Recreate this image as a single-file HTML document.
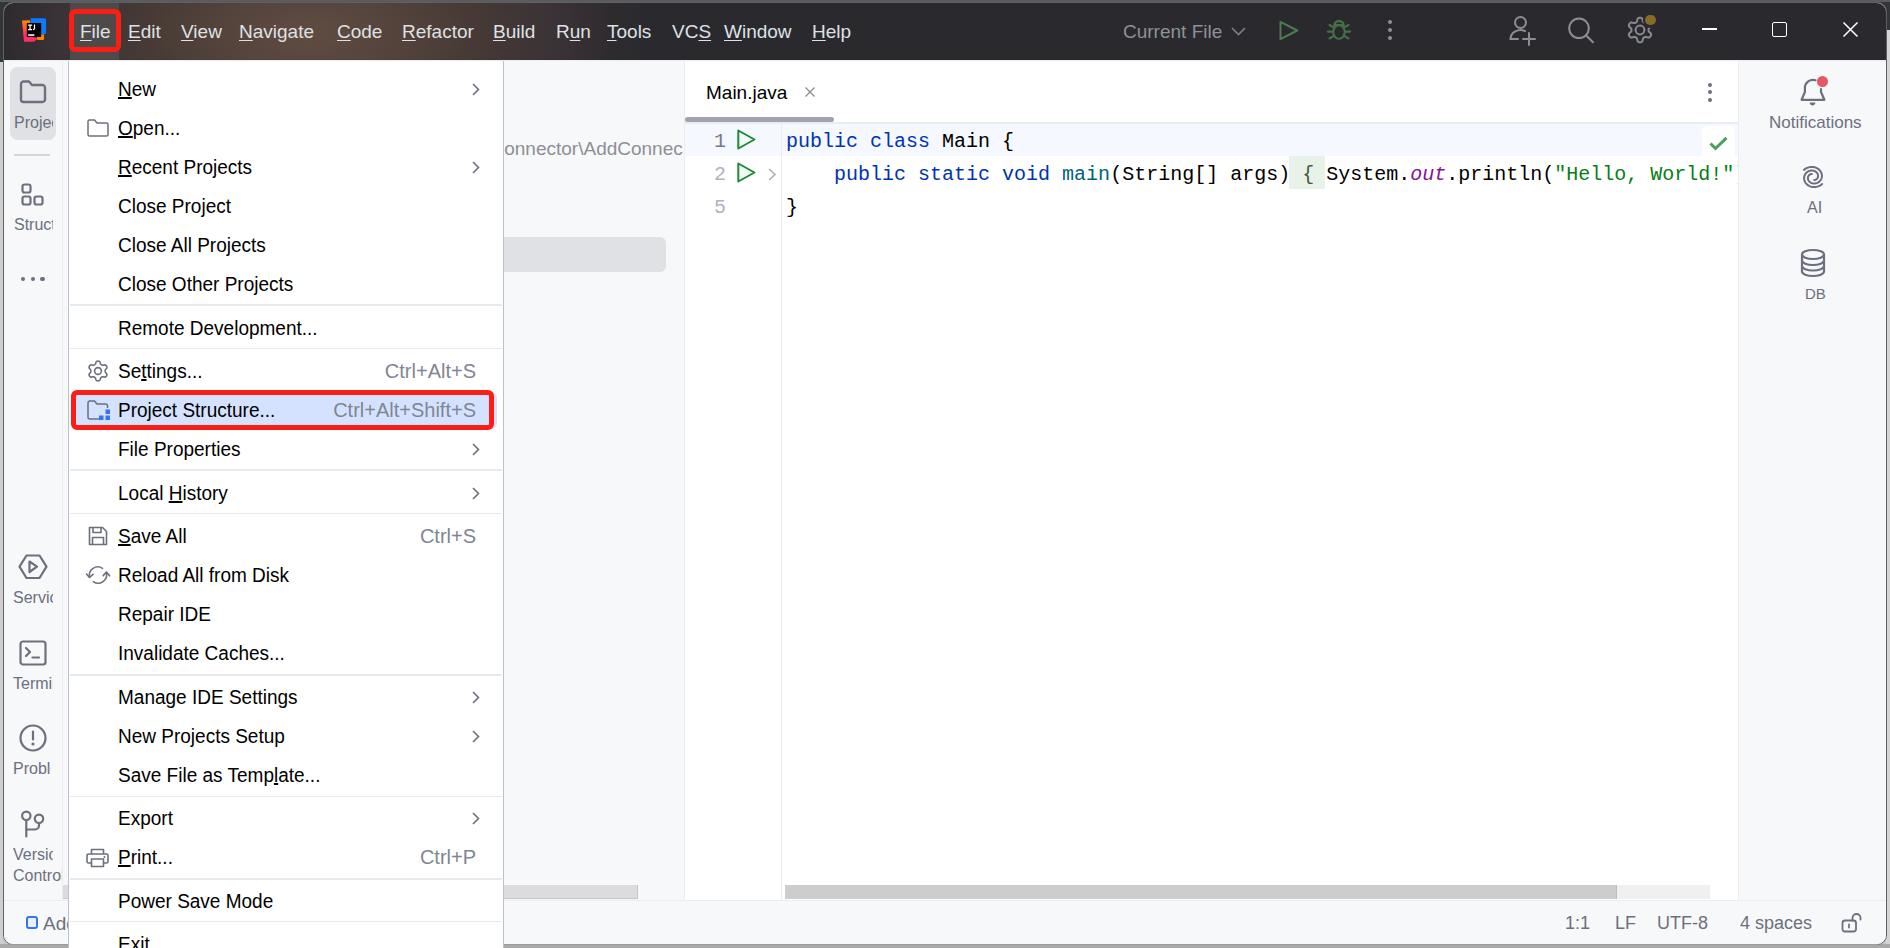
<!DOCTYPE html>
<html><head><meta charset="utf-8">
<style>
*{margin:0;padding:0;box-sizing:border-box}
html,body{width:1890px;height:948px;overflow:hidden}
body{position:relative;background:#c8c8c8;font-family:"Liberation Sans",sans-serif}
.a{position:absolute}
.t{position:absolute;white-space:pre;font-family:"Liberation Sans",sans-serif}
.m{position:absolute;white-space:pre;font-family:"Liberation Mono",monospace;font-size:20px;line-height:20px}
i.u{font-style:normal;text-decoration:underline;text-underline-offset:1px;text-decoration-thickness:2px}
.tb i.u{text-decoration-thickness:1px;text-underline-offset:1.5px}
svg{position:absolute;overflow:visible}
</style></head><body>
<div class="a" style="left:0;top:0;width:1890px;height:62px;background:#333538"></div>
<div class="a" style="left:0;top:0;width:1890px;height:2px;background:#595b5e"></div>
<div class="a" style="left:0;top:62px;width:3px;height:886px;background:#cfcfcf"></div>
<div class="a" style="left:1886px;top:30px;width:4px;height:918px;background:#d4d4d4"></div>
<div class="a" style="left:0;top:944px;width:1890px;height:4px;background:#a9a9a9"></div>
<div class="a" style="left:3px;top:2px;width:1884px;height:943px;border-radius:10px;border:1px solid #5f6064;background:#f7f8fa;overflow:hidden"><div class="a" style="left:0;top:0;width:1882px;height:58px;background:radial-gradient(ellipse 340px 170px at 305px 30px,#604c41 0%,#56453c 22%,#473a36 48%,#3a3236 74%,#2e2b2e 90%,#2a2a2e 100%)"></div></div>
<div class="a" style="left:10px;top:944px;width:1868px;height:1px;background:#9a9b9e"></div>
<div class="a" style="left:70px;top:3px;width:49px;height:57px;background:#4f4a4a"></div>
<div class="a" style="left:4px;top:60px;width:1882px;height:1px;background:#ebecf0"></div>
<div class="t tb" style="left:80px;top:22px;font-size:19px;line-height:19px;color:#dfe1e5;"><i class="u">F</i>ile</div>
<div class="t tb" style="left:128px;top:22px;font-size:19px;line-height:19px;color:#dfe1e5;"><i class="u">E</i>dit</div>
<div class="t tb" style="left:181px;top:22px;font-size:19px;line-height:19px;color:#dfe1e5;"><i class="u">V</i>iew</div>
<div class="t tb" style="left:239px;top:22px;font-size:19px;line-height:19px;color:#dfe1e5;"><i class="u">N</i>avigate</div>
<div class="t tb" style="left:337px;top:22px;font-size:19px;line-height:19px;color:#dfe1e5;"><i class="u">C</i>ode</div>
<div class="t tb" style="left:402px;top:22px;font-size:19px;line-height:19px;color:#dfe1e5;"><i class="u">R</i>efactor</div>
<div class="t tb" style="left:493px;top:22px;font-size:19px;line-height:19px;color:#dfe1e5;"><i class="u">B</i>uild</div>
<div class="t tb" style="left:556px;top:22px;font-size:19px;line-height:19px;color:#dfe1e5;">R<i class="u">u</i>n</div>
<div class="t tb" style="left:607px;top:22px;font-size:19px;line-height:19px;color:#dfe1e5;"><i class="u">T</i>ools</div>
<div class="t tb" style="left:672px;top:22px;font-size:19px;line-height:19px;color:#dfe1e5;">VC<i class="u">S</i></div>
<div class="t tb" style="left:724px;top:22px;font-size:19px;line-height:19px;color:#dfe1e5;"><i class="u">W</i>indow</div>
<div class="t tb" style="left:812px;top:22px;font-size:19px;line-height:19px;color:#dfe1e5;"><i class="u">H</i>elp</div>
<svg style="left:21px;top:17px" width="26" height="26" viewBox="0 0 26 26">
<defs><linearGradient id="lg1" x1="0" y1="0" x2="0" y2="1"><stop offset="0" stop-color="#ff8a00"/><stop offset="0.45" stop-color="#ff4a4a"/><stop offset="0.7" stop-color="#ff2d66"/><stop offset="1" stop-color="#ff2d66"/></linearGradient></defs>
<path d="M1 3.6 L9 3.2 L12 20 L17 21.4 L12.8 24.8 L3 24.8 Z" fill="url(#lg1)"/>
<path d="M9.6 1.3 L23.3 1.3 Q25 1.3 25 3 L25 16.3 L20.4 19.5 L10 12 Z" fill="#087cfa"/>
<rect x="16" y="17.6" width="7" height="5.4" rx="1" fill="#ff8100"/>
<rect x="5.8" y="6" width="14.4" height="14" fill="#000"/>
<path d="M7.1 8.1 H11.1 M9.1 8.1 V12.7 M7.1 12.7 H11.1 M13.5 7.5 V11.3 Q13.5 12.7 12 12.7" stroke="#fff" stroke-width="1.3" fill="none"/>
<rect x="7.1" y="17.2" width="6.3" height="1.7" fill="#e8e8e8"/>
</svg>
<div class="a" style="left:69px;top:9px;width:52px;height:43px;border:5px solid #fb1e14;border-radius:6px"></div>
<div class="t" style="left:1123px;top:22px;font-size:19px;line-height:19px;color:#8e9198;">Current File</div>
<svg style="left:1231px;top:27px" width="15" height="9" viewBox="0 0 15 9"><path d="M1 1 L7.5 7.5 L14 1" stroke="#7d8087" stroke-width="1.6" fill="none"/></svg>
<svg style="left:1279px;top:20px" width="20" height="21" viewBox="0 0 20 21"><path d="M1.5 1.8 L18.2 10.5 L1.5 19.2 Z" stroke="#4a7d50" stroke-width="2" fill="none" stroke-linejoin="round"/></svg>
<svg style="left:1327px;top:18px" width="25" height="23" viewBox="0 0 25 23"><g stroke="#447049" stroke-width="2.1" fill="none" stroke-linecap="round">
<path d="M7.3 7 A4.8 4.8 0 0 1 16.7 7 Z"/><ellipse cx="12" cy="14" rx="5.7" ry="6.8"/>
<path d="M2.5 7 L6.5 9.3 M21.5 7 L17.5 9.3 M0.8 13.6 H6 M23.2 13.6 H18 M2.5 20.5 L6.4 18.2 M21.5 20.5 L17.6 18.2"/></g></svg>
<div class="a" style="left:1388px;top:20px;width:4px;height:4px;border-radius:50%;background:#8e9198"></div>
<div class="a" style="left:1388px;top:28.2px;width:4px;height:4px;border-radius:50%;background:#8e9198"></div>
<div class="a" style="left:1388px;top:36.3px;width:4px;height:4px;border-radius:50%;background:#8e9198"></div>
<svg style="left:1509px;top:16px" width="28" height="30" viewBox="0 0 28 30"><g stroke="#8b8e95" stroke-width="2" fill="none" stroke-linecap="round">
<circle cx="11.5" cy="6.5" r="5.5"/><path d="M1.5 23 A10 9 0 0 1 16 15"/><path d="M1.5 23 H9"/><path d="M20 17 V29 M14 23 H26"/></g></svg>
<svg style="left:1568px;top:17px" width="28" height="28" viewBox="0 0 28 28"><g stroke="#8b8e95" stroke-width="2" fill="none" stroke-linecap="round">
<circle cx="11" cy="11.3" r="9.8"/><path d="M18.2 18.5 L25 25.2"/></g></svg>
<svg style="left:1626px;top:16px" width="28" height="28" viewBox="-14 -14 28 28"><g stroke="#868a91" stroke-width="2" fill="none" stroke-linejoin="round">
<path d="M8.50 0.00 L8.51 0.45 L8.58 0.90 L8.77 1.39 L9.25 1.97 L10.05 2.69 L10.79 3.51 L11.12 4.27 L11.12 4.95 L10.94 5.57 L10.65 6.15 L10.29 6.68 L9.85 7.16 L9.26 7.50 L8.43 7.59 L7.35 7.35 L6.33 7.03 L5.59 6.90 L5.07 6.98 L4.64 7.15 L4.25 7.36 L3.87 7.60 L3.51 7.88 L3.18 8.29 L2.92 8.99 L2.69 10.05 L2.36 11.10 L1.86 11.77 L1.27 12.11 L0.64 12.26 L0.00 12.30 L-0.64 12.26 L-1.27 12.11 L-1.86 11.77 L-2.36 11.10 L-2.69 10.05 L-2.92 8.99 L-3.18 8.29 L-3.51 7.88 L-3.87 7.60 L-4.25 7.36 L-4.64 7.15 L-5.07 6.98 L-5.59 6.90 L-6.33 7.03 L-7.35 7.35 L-8.43 7.59 L-9.26 7.50 L-9.85 7.16 L-10.29 6.68 L-10.65 6.15 L-10.94 5.57 L-11.12 4.95 L-11.12 4.27 L-10.79 3.51 L-10.05 2.69 L-9.25 1.97 L-8.77 1.39 L-8.58 0.90 L-8.51 0.45 L-8.50 0.00 L-8.51 -0.45 L-8.58 -0.90 L-8.77 -1.39 L-9.25 -1.97 L-10.05 -2.69 L-10.79 -3.51 L-11.12 -4.27 L-11.12 -4.95 L-10.94 -5.57 L-10.65 -6.15 L-10.29 -6.68 L-9.85 -7.16 L-9.26 -7.50 L-8.43 -7.59 L-7.35 -7.35 L-6.33 -7.03 L-5.59 -6.90 L-5.07 -6.98 L-4.64 -7.15 L-4.25 -7.36 L-3.87 -7.60 L-3.51 -7.88 L-3.18 -8.29 L-2.92 -8.99 L-2.69 -10.05 L-2.36 -11.10 L-1.86 -11.77 L-1.27 -12.11 L-0.64 -12.26 L-0.00 -12.30 L0.64 -12.26 L1.27 -12.11 L1.86 -11.77 L2.36 -11.10 L2.69 -10.05 L2.92 -8.99 L3.18 -8.29 L3.51 -7.88 L3.87 -7.60 L4.25 -7.36 L4.64 -7.15 L5.07 -6.98 L5.59 -6.90 L6.33 -7.03 L7.35 -7.35 L8.43 -7.59 L9.26 -7.50 L9.85 -7.16 L10.29 -6.68 L10.65 -6.15 L10.94 -5.57 L11.12 -4.95 L11.12 -4.27 L10.79 -3.51 L10.05 -2.69 L9.25 -1.97 L8.77 -1.39 L8.58 -0.90 L8.51 -0.45 L8.50 -0.00Z"/>
<circle cx="0" cy="0" r="4.4"/></g></svg>
<div class="a" style="left:1642.8px;top:12.7px;width:15px;height:15px;border-radius:50%;background:#2a2a2e"></div>
<div class="a" style="left:1645px;top:14.9px;width:10.6px;height:10.6px;border-radius:50%;background:#8a6a27"></div>
<div class="a" style="left:1702px;top:28px;width:15px;height:1.5px;background:#fff"></div>
<div class="a" style="left:1772px;top:22px;width:15px;height:15px;border:1.5px solid #fff;border-radius:2px"></div>
<svg style="left:1843px;top:22px" width="15" height="15" viewBox="0 0 15 15"><path d="M0.5 0.5 L14.5 14.5 M14.5 0.5 L0.5 14.5" stroke="#fff" stroke-width="1.5"/></svg>
<div class="a" style="left:62px;top:61px;width:1px;height:839px;background:#ebecf0"></div>
<div class="a" style="left:10px;top:67px;width:46px;height:73px;border-radius:8px;background:#dfe1e5"></div>
<svg style="left:19px;top:80px" width="28" height="24" viewBox="0 0 28 24"><path d="M2 4 a2.5 2.5 0 0 1 2.5-2.5 H10 L13 5 H23.5 a2.5 2.5 0 0 1 2.5 2.5 V19.5 a2.5 2.5 0 0 1-2.5 2.5 H4.5 A2.5 2.5 0 0 1 2 19.5 Z" stroke="#6c707e" stroke-width="2.4" fill="none" stroke-linejoin="round"/></svg>
<div class="t" style="left:14px;top:115px;width:39px;overflow:hidden;font-size:16px;line-height:16px;color:#6c707e">Project</div>
<div class="a" style="left:14px;top:154px;width:36px;height:1.5px;background:#d3d5db"></div>
<svg style="left:21px;top:183px" width="25" height="24" viewBox="0 0 25 24"><g stroke="#6c707e" stroke-width="2.2" fill="none"><rect x="1.5" y="1.5" width="8" height="8" rx="2"/><rect x="1.5" y="13.5" width="8" height="8" rx="2"/><rect x="13.5" y="13.5" width="8" height="8" rx="2"/></g></svg>
<div class="t" style="left:14px;top:217px;width:39px;overflow:hidden;font-size:16px;line-height:16px;color:#6c707e">Structure</div>
<div class="a" style="left:20.8px;top:277px;width:4.4px;height:4.4px;border-radius:50%;background:#6c707e"></div>
<div class="a" style="left:30.8px;top:277px;width:4.4px;height:4.4px;border-radius:50%;background:#6c707e"></div>
<div class="a" style="left:40.3px;top:277px;width:4.4px;height:4.4px;border-radius:50%;background:#6c707e"></div>
<svg style="left:18px;top:554px" width="30" height="26" viewBox="0 0 30 26"><g stroke="#6c707e" stroke-width="2.2" fill="none" stroke-linejoin="round"><path d="M8.5 1.5 H21.5 L28.5 12.7 L21.5 24 H8.5 L1.5 12.7 Z"/><path d="M11.5 7.5 L19 12.7 L11.5 18 Z"/></g></svg>
<div class="t" style="left:13px;top:590px;width:40px;overflow:hidden;font-size:16px;line-height:16px;color:#6c707e">Services</div>
<svg style="left:19px;top:640px" width="28" height="26" viewBox="0 0 28 26"><g stroke="#6c707e" stroke-width="2.2" fill="none" stroke-linejoin="round" stroke-linecap="round"><rect x="1.5" y="1.5" width="25" height="23" rx="2.5"/><path d="M7 8 L11 12 L7 16"/><path d="M13.5 17.5 H20"/></g></svg>
<div class="t" style="left:13px;top:676px;width:40px;overflow:hidden;font-size:16px;line-height:16px;color:#6c707e">Terminal</div>
<svg style="left:19px;top:724px" width="28" height="28" viewBox="0 0 28 28"><g stroke="#6c707e" stroke-width="2.2" fill="none" stroke-linecap="round"><circle cx="14" cy="14" r="12.5"/><path d="M14 7.5 V15.5"/></g><circle cx="14" cy="20" r="1.6" fill="#6c707e"/></svg>
<div class="t" style="left:13px;top:761px;width:38px;overflow:hidden;font-size:16px;line-height:16px;color:#6c707e">Problems</div>
<svg style="left:20px;top:810px" width="26" height="30" viewBox="0 0 26 30"><g stroke="#6c707e" stroke-width="2.2" fill="none" stroke-linecap="round"><circle cx="6.3" cy="5.8" r="4.2"/><circle cx="19" cy="8.8" r="4.2"/><path d="M6.3 10 V26.5"/><path d="M19 13 V15.5 a4 4 0 0 1 -4 4 H6.3"/></g></svg>
<div class="t" style="left:13px;top:847px;width:40px;overflow:hidden;font-size:16px;line-height:16px;color:#6c707e">Version</div>
<div class="t" style="left:13px;top:868px;width:49px;overflow:hidden;font-size:16px;line-height:16px;color:#6c707e">Control</div>
<div class="a" style="left:684px;top:61px;width:1px;height:839px;background:#ebecf0"></div>
<div class="a" style="left:63px;top:61px;width:620px;height:839px;overflow:hidden"><div class="t" style="left:380px;top:78px;font-size:19px;line-height:19px;color:#8c8f96">InsertConnector\AddConnector</div></div>
<div class="a" style="left:480px;top:237px;width:186px;height:35px;border-radius:6px;background:#dfe1e5"></div>
<div class="a" style="left:63px;top:885px;width:575px;height:14px;background:#dcdcde;border-right:1px solid #c4c4c6;border-bottom:1px solid #c8c8ca"></div>
<div class="a" style="left:685px;top:61px;width:1053px;height:839px;background:#ffffff"></div>
<div class="a" style="left:685px;top:122px;width:1053px;height:2px;background:#ebecf0"></div>
<div class="a" style="left:685px;top:117px;width:149px;height:5px;border-radius:3px;background:#a0a4ae"></div>
<div class="t" style="left:706px;top:83px;font-size:19px;line-height:19px;color:#000;">Main.java</div>
<svg style="left:805px;top:87px" width="10" height="10" viewBox="0 0 10 10"><path d="M0.5 0.5 L9.5 9.5 M9.5 0.5 L0.5 9.5" stroke="#8c8f96" stroke-width="1.4"/></svg>
<div class="a" style="left:1708px;top:82.7px;width:4px;height:4px;border-radius:50%;background:#6c707e"></div>
<div class="a" style="left:1708px;top:90px;width:4px;height:4px;border-radius:50%;background:#6c707e"></div>
<div class="a" style="left:1708px;top:97.7px;width:4px;height:4px;border-radius:50%;background:#6c707e"></div>
<div class="a" style="left:685px;top:124px;width:1053px;height:32px;background:#f5f8fe"></div>
<div class="a" style="left:781px;top:123px;width:1px;height:777px;background:#ebecf0"></div>
<div class="a" style="left:1702px;top:126px;width:33px;height:30px;border-radius:6px 6px 0 0;background:#fff"></div>
<svg style="left:1709px;top:136px" width="19" height="15" viewBox="0 0 19 15"><path d="M1.5 7.5 L6.5 12.5 L17.5 1.8" stroke="#4a9f5b" stroke-width="3" fill="none"/></svg>
<div class="m" style="left:714px;top:132px"><span style="color:#767a8a">1</span></div>
<div class="m" style="left:714px;top:165px"><span style="color:#aeb3c2">2</span></div>
<div class="m" style="left:714px;top:198px"><span style="color:#aeb3c2">5</span></div>
<svg style="left:737px;top:129px" width="19" height="21" viewBox="0 0 19 21"><path d="M1.3 1.5 L17.5 10.5 L1.3 19.5 Z" stroke="#208a3c" stroke-width="2" fill="#f2fbf3" stroke-linejoin="round"/></svg>
<svg style="left:737px;top:162px" width="19" height="21" viewBox="0 0 19 21"><path d="M1.3 1.5 L17.5 10.5 L1.3 19.5 Z" stroke="#208a3c" stroke-width="2" fill="#f2fbf3" stroke-linejoin="round"/></svg>
<svg style="left:768px;top:168px" width="9" height="13" viewBox="0 0 9 13"><path d="M1 1 L7 6.5 L1 12" stroke="#a8adbd" stroke-width="1.5" fill="none"/></svg>
<div class="m" style="left:786px;top:132px"><span style="color:#0033b3">public</span> <span style="color:#0033b3">class</span> <span style="color:#000">Main {</span></div>
<div class="a" style="left:1289px;top:156px;width:36px;height:33px;background:#e8f2e8"></div>
<div class="m" style="left:786px;top:165px">    <span style="color:#0033b3">public</span> <span style="color:#0033b3">static</span> <span style="color:#0033b3">void</span> <span style="color:#00627a">main</span><span style="color:#000">(String[] args) </span><span style="color:#445a44">{</span> <span style="color:#000">System.</span><span style="color:#871094;font-style:italic">out</span><span style="color:#000">.println(</span><span style="color:#067d17">"Hello, World!"</span><span style="color:#000">);</span></div>
<div class="m" style="left:786px;top:198px"><span style="color:#000">}</span></div>
<div class="a" style="left:785px;top:885px;width:925px;height:14px;background:#f0f0f0"></div>
<div class="a" style="left:785px;top:885px;width:832px;height:14px;background:#cdcdcd;border-right:1px solid #bdbdbd"></div>
<div class="a" style="left:1738px;top:61px;width:148px;height:839px;background:#f7f8fa;border-left:1px solid #ebecf0"></div>
<svg style="left:1799px;top:77px" width="30" height="30" viewBox="0 0 30 30"><g stroke="#6c707e" stroke-width="2.2" fill="none" stroke-linejoin="round" stroke-linecap="round"><path d="M16.5 3.3 A8 8 0 0 0 5.9 11 V15 L2.6 22.8 H25.4 L22 15 V12"/></g><path d="M10.7 25.6 H16.3 A2.8 2.8 0 0 1 10.7 25.6 Z" fill="#6c707e"/></svg>
<div class="a" style="left:1816.5px;top:75.5px;width:12px;height:12px;border-radius:50%;background:#f7f8fa"></div>
<div class="a" style="left:1817px;top:76px;width:11px;height:11px;border-radius:50%;background:#e55765"></div>
<div class="t" style="left:1769px;top:114px;font-size:17px;line-height:17px;color:#6c707e;">Notifications</div>
<svg style="left:1799px;top:164px" width="28" height="26" viewBox="0 0 28 26"><path d="M12.82 9.99 L12.40 10.02 L11.96 10.10 L11.53 10.23 L11.11 10.42 L10.70 10.66 L10.32 10.95 L9.96 11.30 L9.64 11.69 L9.38 12.13 L9.16 12.61 L9.00 13.12 L8.91 13.66 L8.89 14.22 L8.94 14.80 L9.07 15.38 L9.27 15.95 L9.56 16.51 L9.92 17.05 L10.36 17.56 L10.87 18.02 L11.45 18.44 L12.09 18.80 L12.78 19.09 L13.52 19.30 L14.30 19.44 L15.11 19.50 L15.94 19.47 L16.77 19.34 L17.59 19.13 L18.40 18.82 L19.17 18.41 L19.91 17.92 L20.59 17.35 L21.20 16.69 L21.73 15.97 L22.18 15.17 L22.53 14.32 L22.78 13.43 L22.91 12.50 L22.93 11.54 L22.83 10.58 L22.61 9.62 L22.26 8.67 L21.79 7.76 L21.21 6.89 L20.50 6.07 L19.70 5.33 L18.79 4.66 L17.79 4.10 L16.71 3.63 L15.57 3.28 L14.38 3.05 L13.15 2.94 L11.89 2.97 L10.64 3.13 L9.40 3.43 L8.18 3.86 L7.02 4.42 L5.92 5.12 L4.90 5.93 M15.18 16.01 L15.60 15.98 L16.04 15.90 L16.47 15.77 L16.89 15.58 L17.30 15.34 L17.68 15.05 L18.04 14.70 L18.36 14.31 L18.62 13.87 L18.84 13.39 L19.00 12.88 L19.09 12.34 L19.11 11.78 L19.06 11.20 L18.93 10.62 L18.73 10.05 L18.44 9.49 L18.08 8.95 L17.64 8.44 L17.13 7.98 L16.55 7.56 L15.91 7.20 L15.22 6.91 L14.48 6.70 L13.70 6.56 L12.89 6.50 L12.06 6.53 L11.23 6.66 L10.41 6.87 L9.60 7.18 L8.83 7.59 L8.09 8.08 L7.41 8.65 L6.80 9.31 L6.27 10.03 L5.82 10.83 L5.47 11.68 L5.22 12.57 L5.09 13.50 L5.07 14.46 L5.17 15.42 L5.39 16.38 L5.74 17.33 L6.21 18.24 L6.79 19.11 L7.50 19.93 L8.30 20.67 L9.21 21.34 L10.21 21.90 L11.29 22.37 L12.43 22.72 L13.62 22.95 L14.85 23.06 L16.11 23.03 L17.36 22.87 L18.60 22.57 L19.82 22.14 L20.98 21.58 L22.08 20.88 L23.10 20.07" stroke="#6c707e" stroke-width="2" fill="none" stroke-linecap="round" stroke-linejoin="round"/></svg>
<div class="t" style="left:1807px;top:200px;font-size:16px;line-height:16px;color:#6c707e;">AI</div>
<svg style="left:1800px;top:249px" width="27" height="28" viewBox="0 0 27 28"><g stroke="#6c707e" stroke-width="2.2" fill="none"><ellipse cx="13" cy="5.5" rx="11" ry="4.5"/><path d="M2 5.5 V22.5 C2 25 7 27 13 27 C19 27 24 25 24 22.5 V5.5"/><path d="M2 11.5 C2 14 7 16 13 16 C19 16 24 14 24 11.5"/><path d="M2 17 C2 19.5 7 21.5 13 21.5 C19 21.5 24 19.5 24 17"/></g></svg>
<div class="t" style="left:1805px;top:286px;font-size:15px;line-height:15px;color:#6c707e;">DB</div>
<div class="a" style="left:4px;top:900px;width:1882px;height:1px;background:#ebecf0"></div>
<div class="a" style="left:4px;top:901px;width:1882px;height:43px;background:#f7f8fa;border-radius:0 0 9px 9px"></div>
<div class="a" style="left:26px;top:916px;width:12px;height:13px;border:2px solid #3574f0;border-radius:3px;background:#e8effd"></div>
<div class="t" style="left:43px;top:914px;font-size:19px;line-height:19px;color:#6c707e;">Add</div>
<div class="t" style="left:1565px;top:914px;font-size:18px;line-height:18px;color:#6c707e;">1:1</div>
<div class="t" style="left:1615px;top:914px;font-size:18px;line-height:18px;color:#6c707e;">LF</div>
<div class="t" style="left:1657px;top:914px;font-size:18px;line-height:18px;color:#6c707e;">UTF-8</div>
<div class="t" style="left:1740px;top:914px;font-size:18px;line-height:18px;color:#6c707e;">4 spaces</div>
<svg style="left:1841px;top:913px" width="22" height="20" viewBox="0 0 22 20"><g stroke="#6c707e" stroke-width="1.8" fill="none" stroke-linecap="round"><rect x="1.5" y="7.5" width="13.5" height="11" rx="2.5"/><path d="M11.5 7.5 V5 a4 4 0 0 1 8 0 V6.5"/><path d="M8 11.5 V14.5"/></g></svg>
<div class="a" style="left:68px;top:61px;width:436px;height:890px;background:#fff;border-left:1px solid #bcc0cb;border-right:1px solid #bcc0cb"></div>
<div class="a" style="left:75px;top:392px;width:422px;height:37px;border-radius:6px;background:#d4e2ff"></div>
<div class="t" style="left:118px;top:79px;font-size:20px;line-height:20px;color:#000;transform:scaleX(0.95);transform-origin:0 0"><i class="u">N</i>ew</div>
<svg style="left:472px;top:83px" width="8" height="13" viewBox="0 0 8 13"><path d="M1 1 L6.5 6.5 L1 12" stroke="#6c707e" stroke-width="1.6" fill="none"/></svg>
<div class="t" style="left:118px;top:118px;font-size:20px;line-height:20px;color:#000;transform:scaleX(0.95);transform-origin:0 0"><i class="u">O</i>pen...</div>
<svg style="left:87px;top:119px" width="22" height="18" viewBox="0 0 22 18"><path d="M1 2.5 a1.5 1.5 0 0 1 1.5-1.5 H7.5 L10 4 H19.5 a1.5 1.5 0 0 1 1.5 1.5 V15.5 a1.5 1.5 0 0 1-1.5 1.5 H2.5 A1.5 1.5 0 0 1 1 15.5 Z" stroke="#6c707e" stroke-width="1.5" fill="none" stroke-linejoin="round"/></svg>
<div class="t" style="left:118px;top:157px;font-size:20px;line-height:20px;color:#000;transform:scaleX(0.95);transform-origin:0 0"><i class="u">R</i>ecent Projects</div>
<svg style="left:472px;top:161px" width="8" height="13" viewBox="0 0 8 13"><path d="M1 1 L6.5 6.5 L1 12" stroke="#6c707e" stroke-width="1.6" fill="none"/></svg>
<div class="t" style="left:118px;top:196px;font-size:20px;line-height:20px;color:#000;transform:scaleX(0.95);transform-origin:0 0">Close Project</div>
<div class="t" style="left:118px;top:235px;font-size:20px;line-height:20px;color:#000;transform:scaleX(0.95);transform-origin:0 0">Close All Projects</div>
<div class="t" style="left:118px;top:274px;font-size:20px;line-height:20px;color:#000;transform:scaleX(0.95);transform-origin:0 0">Close Other Projects</div>
<div class="t" style="left:118px;top:318px;font-size:20px;line-height:20px;color:#000;transform:scaleX(0.95);transform-origin:0 0">Remote Development...</div>
<div class="t" style="left:118px;top:361px;font-size:20px;line-height:20px;color:#000;transform:scaleX(0.95);transform-origin:0 0">Se<i class="u">t</i>tings...</div>
<div class="t" style="right:1414px;top:361px;font-size:20px;line-height:20px;color:#818594">Ctrl+Alt+S</div>
<svg style="left:87px;top:360px" width="22" height="22" viewBox="-11 -11 22 22"><g stroke="#6c707e" stroke-width="1.6" fill="none" stroke-linejoin="round"><path d="M7.15 0.00 L7.16 0.38 L7.20 0.76 L7.33 1.16 L7.66 1.63 L8.21 2.20 L8.72 2.83 L8.94 3.43 L8.92 3.97 L8.76 4.46 L8.53 4.92 L8.25 5.35 L7.90 5.74 L7.44 6.03 L6.81 6.14 L6.01 6.01 L5.24 5.82 L4.67 5.77 L4.26 5.86 L3.90 6.01 L3.58 6.19 L3.25 6.39 L2.94 6.61 L2.66 6.93 L2.42 7.45 L2.20 8.21 L1.91 8.97 L1.50 9.46 L1.02 9.71 L0.51 9.82 L0.00 9.85 L-0.51 9.82 L-1.02 9.71 L-1.50 9.46 L-1.91 8.97 L-2.20 8.21 L-2.42 7.45 L-2.66 6.93 L-2.94 6.61 L-3.25 6.39 L-3.57 6.19 L-3.90 6.01 L-4.26 5.86 L-4.67 5.77 L-5.24 5.82 L-6.01 6.01 L-6.81 6.14 L-7.44 6.03 L-7.90 5.74 L-8.25 5.35 L-8.53 4.92 L-8.76 4.46 L-8.92 3.97 L-8.94 3.43 L-8.72 2.83 L-8.21 2.20 L-7.66 1.63 L-7.33 1.16 L-7.20 0.76 L-7.16 0.38 L-7.15 0.00 L-7.16 -0.38 L-7.20 -0.76 L-7.33 -1.16 L-7.66 -1.63 L-8.21 -2.20 L-8.72 -2.83 L-8.94 -3.43 L-8.92 -3.97 L-8.76 -4.46 L-8.53 -4.92 L-8.25 -5.35 L-7.90 -5.74 L-7.44 -6.03 L-6.81 -6.14 L-6.01 -6.01 L-5.24 -5.82 L-4.67 -5.77 L-4.26 -5.86 L-3.90 -6.01 L-3.58 -6.19 L-3.25 -6.39 L-2.94 -6.61 L-2.66 -6.93 L-2.42 -7.45 L-2.20 -8.21 L-1.91 -8.97 L-1.50 -9.46 L-1.02 -9.71 L-0.51 -9.82 L-0.00 -9.85 L0.51 -9.82 L1.02 -9.71 L1.50 -9.46 L1.91 -8.97 L2.20 -8.21 L2.42 -7.45 L2.66 -6.93 L2.94 -6.61 L3.25 -6.39 L3.58 -6.19 L3.90 -6.01 L4.26 -5.86 L4.67 -5.77 L5.24 -5.82 L6.01 -6.01 L6.81 -6.14 L7.44 -6.03 L7.90 -5.74 L8.25 -5.35 L8.53 -4.92 L8.76 -4.46 L8.92 -3.97 L8.94 -3.43 L8.72 -2.83 L8.21 -2.20 L7.66 -1.63 L7.33 -1.16 L7.20 -0.76 L7.16 -0.38 L7.15 -0.00Z"/><circle r="3.4"/></g></svg>
<div class="t" style="left:118px;top:400px;font-size:20px;line-height:20px;color:#000;transform:scaleX(0.95);transform-origin:0 0">Project Structure...</div>
<div class="t" style="right:1414px;top:400px;font-size:20px;line-height:20px;color:#818594">Ctrl+Alt+Shift+S</div>
<svg style="left:87px;top:400px" width="24" height="21" viewBox="0 0 24 21"><path d="M12 19 H3 a2 2 0 0 1-2-2 V3 a2 2 0 0 1 2-2 H7.5 L10 4 H18.5 a2 2 0 0 1 2 2 V8" stroke="#6c707e" stroke-width="1.5" fill="none" stroke-linejoin="round"/><rect x="12" y="15.5" width="4.5" height="4.5" fill="#3574f0"/><rect x="18.5" y="15.5" width="4.5" height="4.5" fill="#3574f0"/><rect x="18.5" y="9.5" width="4.5" height="4.5" fill="#3574f0"/></svg>
<div class="t" style="left:118px;top:439px;font-size:20px;line-height:20px;color:#000;transform:scaleX(0.95);transform-origin:0 0">File Properties</div>
<svg style="left:472px;top:443px" width="8" height="13" viewBox="0 0 8 13"><path d="M1 1 L6.5 6.5 L1 12" stroke="#6c707e" stroke-width="1.6" fill="none"/></svg>
<div class="t" style="left:118px;top:483px;font-size:20px;line-height:20px;color:#000;transform:scaleX(0.95);transform-origin:0 0">Local <i class="u">H</i>istory</div>
<svg style="left:472px;top:487px" width="8" height="13" viewBox="0 0 8 13"><path d="M1 1 L6.5 6.5 L1 12" stroke="#6c707e" stroke-width="1.6" fill="none"/></svg>
<div class="t" style="left:118px;top:526px;font-size:20px;line-height:20px;color:#000;transform:scaleX(0.95);transform-origin:0 0"><i class="u">S</i>ave All</div>
<div class="t" style="right:1414px;top:526px;font-size:20px;line-height:20px;color:#818594">Ctrl+S</div>
<svg style="left:88px;top:526px" width="20" height="20" viewBox="0 0 20 20"><g stroke="#6c707e" stroke-width="1.6" fill="none" stroke-linejoin="round"><path d="M1.5 1.5 H14.5 L18.5 5.5 V18.5 H1.5 Z"/><path d="M5 1.5 V6.5 H13 V1.5"/><path d="M4.5 18.5 V11.5 H15.5 V18.5"/></g></svg>
<div class="t" style="left:118px;top:565px;font-size:20px;line-height:20px;color:#000;transform:scaleX(0.95);transform-origin:0 0">Reload All from Disk</div>
<svg style="left:85px;top:564px" width="26" height="22" viewBox="0 0 26 22"><g stroke="#6c707e" stroke-width="1.6" fill="none" stroke-linecap="round" stroke-linejoin="round"><path d="M17.5 4.3 A8.5 8.5 0 0 0 4.5 13"/><path d="M1.5 10 L4.5 13.5 L8 10.3"/><path d="M8.3 17.6 A8.5 8.5 0 0 0 21.4 8.5"/><path d="M18.2 11.6 L21.4 8 L24.6 11.8"/></g></svg>
<div class="t" style="left:118px;top:604px;font-size:20px;line-height:20px;color:#000;transform:scaleX(0.95);transform-origin:0 0">Repair IDE</div>
<div class="t" style="left:118px;top:643px;font-size:20px;line-height:20px;color:#000;transform:scaleX(0.95);transform-origin:0 0">Invalidate Caches...</div>
<div class="t" style="left:118px;top:687px;font-size:20px;line-height:20px;color:#000;transform:scaleX(0.95);transform-origin:0 0">Manage IDE Settings</div>
<svg style="left:472px;top:691px" width="8" height="13" viewBox="0 0 8 13"><path d="M1 1 L6.5 6.5 L1 12" stroke="#6c707e" stroke-width="1.6" fill="none"/></svg>
<div class="t" style="left:118px;top:726px;font-size:20px;line-height:20px;color:#000;transform:scaleX(0.95);transform-origin:0 0">New Projects Setup</div>
<svg style="left:472px;top:730px" width="8" height="13" viewBox="0 0 8 13"><path d="M1 1 L6.5 6.5 L1 12" stroke="#6c707e" stroke-width="1.6" fill="none"/></svg>
<div class="t" style="left:118px;top:765px;font-size:20px;line-height:20px;color:#000;transform:scaleX(0.95);transform-origin:0 0">Save File as Temp<i class="u">l</i>ate...</div>
<div class="t" style="left:118px;top:808px;font-size:20px;line-height:20px;color:#000;transform:scaleX(0.95);transform-origin:0 0">Export</div>
<svg style="left:472px;top:812px" width="8" height="13" viewBox="0 0 8 13"><path d="M1 1 L6.5 6.5 L1 12" stroke="#6c707e" stroke-width="1.6" fill="none"/></svg>
<div class="t" style="left:118px;top:847px;font-size:20px;line-height:20px;color:#000;transform:scaleX(0.95);transform-origin:0 0"><i class="u">P</i>rint...</div>
<div class="t" style="right:1414px;top:847px;font-size:20px;line-height:20px;color:#818594">Ctrl+P</div>
<svg style="left:86px;top:848px" width="23" height="20" viewBox="0 0 23 20"><g stroke="#6c707e" stroke-width="1.6" fill="none" stroke-linejoin="round"><path d="M5.5 6 V1.5 H17.5 V6"/><path d="M5.5 15 H2.5 a1.5 1.5 0 0 1-1.5-1.5 V7.5 a1.5 1.5 0 0 1 1.5-1.5 H20.5 a1.5 1.5 0 0 1 1.5 1.5 V13.5 a1.5 1.5 0 0 1-1.5 1.5 H17.5"/><path d="M5.5 11 H17.5 V18.5 H5.5 Z"/></g><circle cx="18.5" cy="9" r="1" fill="#6c707e"/></svg>
<div class="t" style="left:118px;top:891px;font-size:20px;line-height:20px;color:#000;transform:scaleX(0.95);transform-origin:0 0">Power Save Mode</div>
<div class="t" style="left:118px;top:934px;font-size:20px;line-height:20px;color:#000;transform:scaleX(0.95);transform-origin:0 0">Exit</div>
<div class="a" style="left:70px;top:304px;width:432px;height:2px;background:#e8e9ed"></div>
<div class="a" style="left:70px;top:348px;width:432px;height:1px;background:#e8e9ed"></div>
<div class="a" style="left:70px;top:469px;width:432px;height:2px;background:#e8e9ed"></div>
<div class="a" style="left:70px;top:513px;width:432px;height:1px;background:#e8e9ed"></div>
<div class="a" style="left:70px;top:674px;width:432px;height:2px;background:#e8e9ed"></div>
<div class="a" style="left:70px;top:796px;width:432px;height:1px;background:#e8e9ed"></div>
<div class="a" style="left:70px;top:878px;width:432px;height:2px;background:#e8e9ed"></div>
<div class="a" style="left:70px;top:921px;width:432px;height:1px;background:#e8e9ed"></div>
<div class="a" style="left:71px;top:390px;width:423px;height:40px;border:5px solid #fb1e14;border-radius:6px"></div>
</body></html>
